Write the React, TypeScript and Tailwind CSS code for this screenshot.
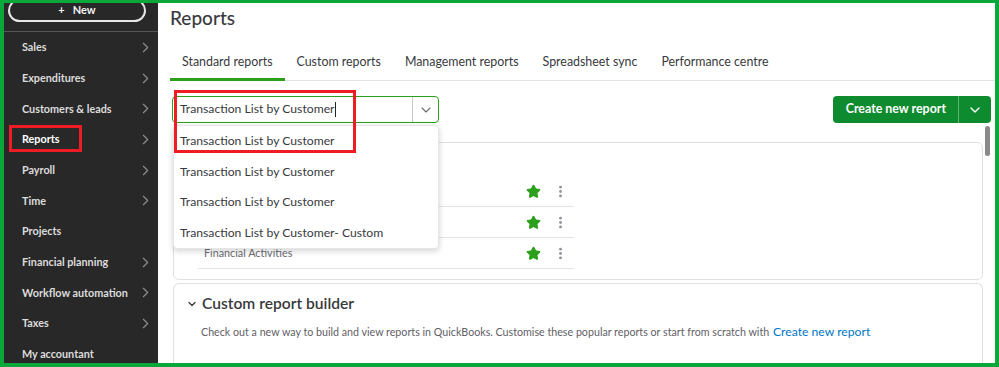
import React from 'react';
import { ChevronRight, ChevronDown, Star, EllipsisVertical } from 'lucide-react';

const navItems = [
  { label: 'Sales', arrow: true },
  { label: 'Expenditures', arrow: true },
  { label: 'Customers & leads', arrow: true },
  { label: 'Reports', arrow: true, marked: true },
  { label: 'Payroll', arrow: true },
  { label: 'Time', arrow: true },
  { label: 'Projects', arrow: false },
  { label: 'Financial planning', arrow: true },
  { label: 'Workflow automation', arrow: true },
  { label: 'Taxes', arrow: true },
  { label: 'My accountant', arrow: false },
];

const tabs = ['Standard reports', 'Custom reports', 'Management reports', 'Spreadsheet sync', 'Performance centre'];

const suggestions = [
  'Transaction List by Customer',
  'Transaction List by Customer',
  'Transaction List by Customer',
  'Transaction List by Customer- Custom',
];

const Sidebar = () => (
  <aside className="w-[154px] shrink-0 bg-[#282828] flex flex-col overflow-hidden">
    <div className="h-[29px] shrink-0 border-b border-[#555] flex items-start px-1">
      <button className="w-[138px] h-[23px] -mt-[4px] rounded-full border-2 border-[#e6e6e6] text-[#f2f2f2] text-[11px] font-bold flex items-center justify-center">
        <span className="mr-2">+</span>New
      </button>
    </div>
    <nav className="flex flex-col shrink-0">
      {navItems.map((item) => (
        <div key={item.label} className="relative h-[30.7px] shrink-0 flex items-center pl-[18px] pr-[4px]">
          <span className={`flex-1 whitespace-nowrap text-[10.8px] font-bold ${item.marked ? 'text-white' : 'text-[#dcdcdc]'}`}>{item.label}</span>
          {item.arrow && <ChevronRight size={17} strokeWidth={1.6} className="text-[#8e8e8e]" />}
          {item.marked && (
            <span className="absolute left-[5px] top-[1px] w-[73px] h-[27px] border-[3px] border-[#ee1c25]" />
          )}
        </div>
      ))}
    </nav>
  </aside>
);

const FavRow = ({ text }: { text?: string }) => (
  <div className="h-[31px] flex items-center border-b border-[#e4e4e4] ml-[24px] w-[376px]">
    <span className="flex-1 pl-[6px] text-[10.8px] text-[#6b6c72]">{text}</span>
    <Star size={15} className="text-[#2ca01c] fill-[#2ca01c] mr-[12px]" />
    <EllipsisVertical size={15} strokeWidth={2.6} className="text-[#8d9096] mr-[6px]" />
  </div>
);

export default function App() {
  return (
    <div
      className="w-[999px] h-[367px] overflow-hidden flex border-t-[3px] border-l-[4px] border-r-[4px] border-b-[4px] border-[#0aa83a] bg-white"
      style={{ fontFamily: 'Lato, "Open Sans", sans-serif' }}
    >
      <Sidebar />
      <main className="relative flex-1 flex flex-col pl-[12px] pr-[4px] text-[#393a3d] overflow-hidden">
        <h1 className="mt-[3px] h-[24px] shrink-0 text-[19px] leading-[24px] font-medium">Reports</h1>

        <div className="mt-[17px] shrink-0 flex border-b border-[#e3e3e3] mr-[-4px]">
          {tabs.map((t, i) => (
            <div
              key={t}
              className={`px-3 h-[34px] flex items-center text-[12.4px] border-b-[3px] -mb-px ${i === 0 ? 'border-[#2ca01c]' : 'border-transparent'}`}
            >
              {t}
            </div>
          ))}
        </div>

        <div className="mt-[15px] shrink-0 flex items-center justify-between">
          <div className="relative ml-[2px]">
            <div className="w-[267px] h-[27px] flex rounded-[4px] border border-[#2ca01c]">
              <div className="flex-1 flex items-center pl-[7px] text-[12.2px] text-[#393a3d]">
                Transaction List by Customer<span className="w-px h-[15px] bg-[#222]" />
              </div>
              <div className="w-[26px] border-l border-[#c9c9c9] flex items-center justify-center">
                <ChevronDown size={16} strokeWidth={1.6} className="text-[#6b6c72]" />
              </div>
            </div>

            <div className="absolute left-[1px] top-[29px] w-[266px] z-20 bg-white rounded-[4px] border border-[#e6e6e6] shadow-[0_2px_6px_rgba(0,0,0,0.18)] flex flex-col">
              {suggestions.map((s, i) => (
                <div key={i} className="h-[30.5px] flex items-center pl-[6px] text-[12.2px] text-[#393a3d]">
                  {s}
                </div>
              ))}
            </div>

            <span className="absolute left-[2px] -top-[6px] w-[182px] h-[63px] z-30 border-[3px] border-[#ee1c25]" />
          </div>

          <div className="flex h-[27px] rounded-[4px] bg-[#0e8a2f] text-white">
            <div className="pl-[13px] pr-[12px] flex items-center text-[12.4px] font-bold">Create new report</div>
            <div className="w-[33px] border-l border-[#5fb774] flex items-center justify-center">
              <ChevronDown size={16} strokeWidth={2} />
            </div>
          </div>
        </div>

        <section className="mt-[19px] ml-[3px] mr-[8px] h-[138px] shrink-0 rounded-[6px] border border-[#e0e0e0] flex flex-col">
          <div className="h-[33px]" />
          <FavRow />
          <FavRow />
          <FavRow text="Financial Activities" />
        </section>

        <section className="mt-[3px] ml-[3px] mr-[8px] flex-1 rounded-t-[6px] border border-b-0 border-[#e0e0e0] flex flex-col">
          <div className="mt-[9px] h-[22px] flex items-center pl-[12px]">
            <ChevronDown size={12} strokeWidth={2.6} className="mr-[4px]" />
            <span className="text-[15.6px] font-semibold">Custom report builder</span>
          </div>
          <p className="mt-[8px] pl-[27px] text-[10.7px] text-[#5f6066] whitespace-nowrap">
            Check out a new way to build and view reports in QuickBooks. Customise these popular reports or start from scratch with{' '}
            <span className="ml-[1px] text-[#0077c5] text-[12.2px]">Create new report</span>
          </p>
          <div className="mt-[20px] pl-[31px] flex text-[10.8px] text-[#5f6066] whitespace-nowrap">
            <span className="w-[352px]">Customer Profitability Summary</span>
            <span className="flex-1">Invoice and Payment Summary</span>
          </div>
        </section>

        <span className="absolute right-[5px] top-[123px] w-[5px] h-[30px] rounded-full bg-[#8a8a8a]" />
      </main>
    </div>
  );
}
